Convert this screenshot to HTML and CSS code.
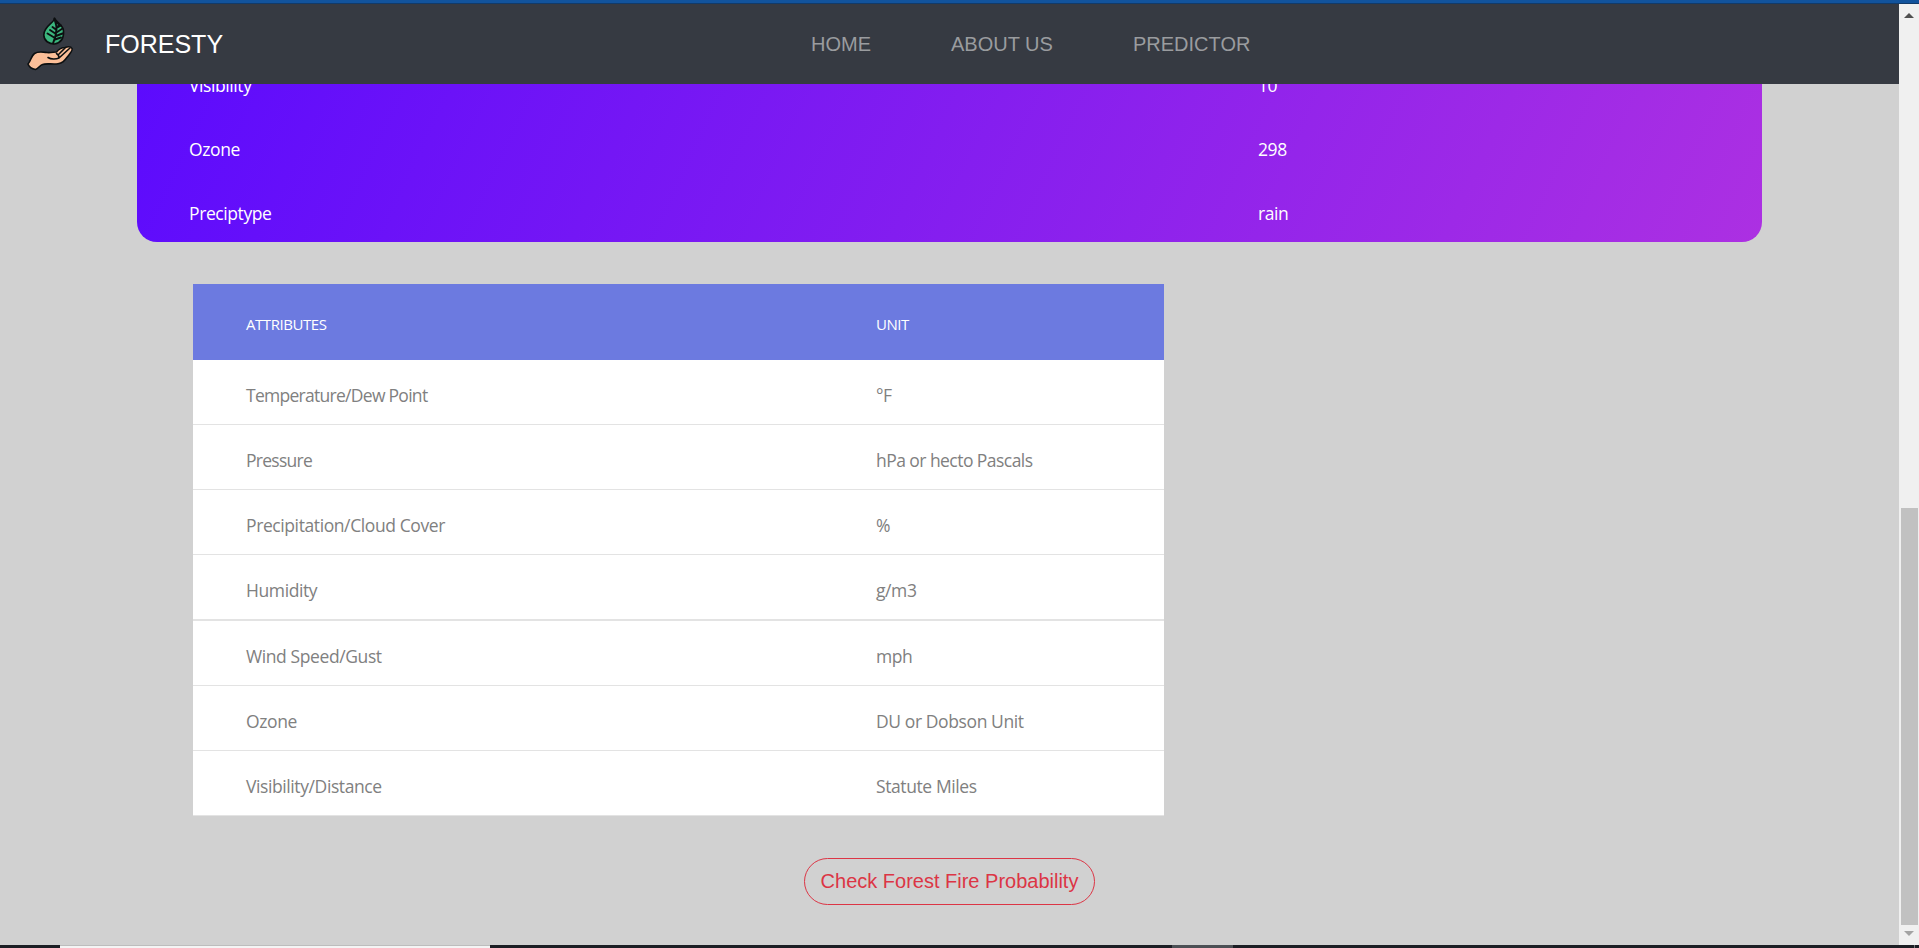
FILE: index.html
```html
<!DOCTYPE html>
<html lang="en">
<head>
<meta charset="utf-8">
<title>Foresty</title>
<link rel="stylesheet" href="styles.css">
</head>
<body>
<div class="top-strip"></div>
<div class="viewport">
  <div class="page">
    <nav class="navbar">
      <svg class="logo" viewBox="0 0 64 66" width="64" height="66" stroke="#0c0f10" stroke-linejoin="round" stroke-linecap="round">
        <path d="M34.500 8.500C34 13 24 16 23.800 25C24 31 29 34 34.500 34C40 33 44 29 43.500 21C43 15 38 14 34.500 8.500Z" fill="#3bb67e" stroke-width="1.600"/>
        <path d="M34.500 8.500C35 13 37 15 36.500 19C36 26 35 29 33 33.500M35 10L39 15L36.500 18L41 15.500M36.500 22.500L42.500 18.500M36 26L42.500 23.500M35 29.500L41 27.500M36.500 20L32.500 17M36 24L30 20M35 28L27.500 23.500" fill="none" stroke-width="1.900"/>
        <path d="M8 54C11 51 11 46 14.500 43.500C18 41 23 42 27 42.500C30 43 34 42 36.500 42C39 39 42 37.500 45 37.500C48 36.500 51 36.500 52 38.500C53 40 50.500 43 48.500 45.500C45 50 43 53.500 38 53.800C32 54.500 26 53 22.500 54.500C19.500 55.500 18.500 58.500 15.500 59.500C12.500 59 9 57 8 54Z" fill="#fcbf98" stroke-width="1.600"/>
        <path d="M28 47.500C31 49.500 36 49.500 39 48L50 38M36.500 43.500C38 44.500 39 45.500 39 47.500M39 44L45 38" fill="none" stroke-width="1.600"/>
      </svg>
      <span class="brand">FORESTY</span>
      <div class="links">
        <a class="link">HOME</a><a class="link link-about">ABOUT US</a><a class="link">PREDICTOR</a>
      </div>
    </nav>
    <main class="content">
      <section class="panel">
        <div class="reading"><span>Visibility</span><span>10</span></div>
        <div class="reading"><span>Ozone</span><span>298</span></div>
        <div class="reading"><span>Preciptype</span><span>rain</span></div>
      </section>
      <section class="units">
        <div class="unit-head"><span>ATTRIBUTES</span><span>UNIT</span></div>
        <div class="unit-row"><span class="tight">Temperature/Dew Point</span><span>°F</span></div>
        <div class="unit-row"><span class="tight">Pressure</span><span class="snug">hPa or hecto Pascals</span></div>
        <div class="unit-row"><span>Precipitation/Cloud Cover</span><span>%</span></div>
        <div class="unit-row unit-row-thick"><span>Humidity</span><span>g/m3</span></div>
        <div class="unit-row"><span>Wind Speed/Gust</span><span>mph</span></div>
        <div class="unit-row"><span>Ozone</span><span>DU or Dobson Unit</span></div>
        <div class="unit-row"><span>Visibility/Distance</span><span>Statute Miles</span></div>
      </section>
      <button class="check">Check Forest Fire Probability</button>
    </main>
  </div>
  <div class="scrollbar">
    <svg class="arrow" width="10" height="5" viewBox="0 0 10 5"><path d="M0 5L5 0L10 5Z" fill="#505050"/></svg>
    <div class="thumb"></div>
    <svg class="arrow" width="10" height="5" viewBox="0 0 10 5"><path d="M0 0L5 5L10 0Z" fill="#a3a3a3"/></svg>
  </div>
</div>
<div class="taskbar"><div class="task-search"></div><div class="task-active"></div><div class="task-end"></div></div>
</body>
</html>
```

FILE: styles.css
```css
* { box-sizing: border-box; }
body {
  margin: 0;
  height: 948px;
  overflow: hidden;
  display: flex;
  flex-direction: column;
  background: #d1d1d1;
  font-family: "Open Sans", "Noto Sans", sans-serif;
}
.top-strip { height: 4px; flex: none; background: #12539c; border-bottom: 1px solid #123a68; }
.viewport { height: 941px; flex: none; display: flex; }
.page { width: 1899px; }
.navbar {
  height: 80px;
  display: flex;
  align-items: center;
  padding-left: 20px;
  background: #363a42;
  font-family: "Liberation Sans", Arial, sans-serif;
}
.logo { flex: none; margin-top: -2px; }
.brand { width: 706px; margin-left: 21px; color: #fff; font-size: 25px; line-height: 30px; }
.links { display: flex; font-size: 20px; line-height: 30px; color: #9a9c9f; }
.link { width: 140px; }
.link-about { width: 182px; }
.content { display: flex; flex-direction: column; }
.panel {
  width: 1625px;
  height: 158px;
  margin-left: 137px;
  display: flex;
  flex-direction: column;
  justify-content: flex-end;
  overflow: hidden;
  border-radius: 0 0 20px 20px;
  background: linear-gradient(115deg, #5c0bfd, #ac30e2);
  color: #fff;
}
.reading {
  flex: none;
  height: 64px;
  padding: 21px 0 15px 52px;
  display: grid;
  grid-template-columns: 1069px 1fr;
  font-size: 17.5px;
  line-height: 28px;
  letter-spacing: -0.4px;
}
.units { width: 971px; margin: 42px 0 0 193px; background: #fff; }
.unit-head, .unit-row { display: grid; grid-template-columns: 630px 1fr; padding-left: 53px; }
.unit-head {
  height: 76px;
  padding-top: 26px;
  background: #6c7ae0;
  color: #fff;
  font-size: 15px;
  line-height: 28px;
  letter-spacing: -0.45px;
}
.unit-row {
  height: 65px;
  padding-top: 21px;
  border-bottom: 1px solid #e3e3e3;
  color: #808080;
  font-size: 17.5px;
  line-height: 28px;
  letter-spacing: -0.4px;
}
.unit-row-thick { height: 66px; border-bottom-width: 2px; }
.tight { letter-spacing: -0.72px; }
.snug { letter-spacing: -0.55px; }
.check {
  align-self: center;
  width: 291px;
  height: 47px;
  margin-top: 42px;
  padding: 0;
  border: 1px solid #dc3545;
  border-radius: 24px;
  background: transparent;
  color: #dc3545;
  font: 20px "Liberation Sans", Arial, sans-serif;
  white-space: nowrap;
}
.scrollbar {
  width: 20px;
  padding: 9px 0;
  display: flex;
  flex-direction: column;
  align-items: center;
  justify-content: space-between;
  background: #f0f0f0;
}
.arrow { display: block; }
.thumb { width: 17px; height: 417px; margin-top: 483px; background: #c1c1c1; }
.taskbar { height: 3px; flex: none; display: flex; background: #1c1e24; }
.task-search { width: 430px; margin-left: 60px; background: #f4f4f4; border-top: 1px solid #bdbdbd; }
.task-active { width: 61px; margin-left: 682px; background: #4c5055; }
.task-end { width: 1px; margin-left: 681px; background: #77787a; }
```
